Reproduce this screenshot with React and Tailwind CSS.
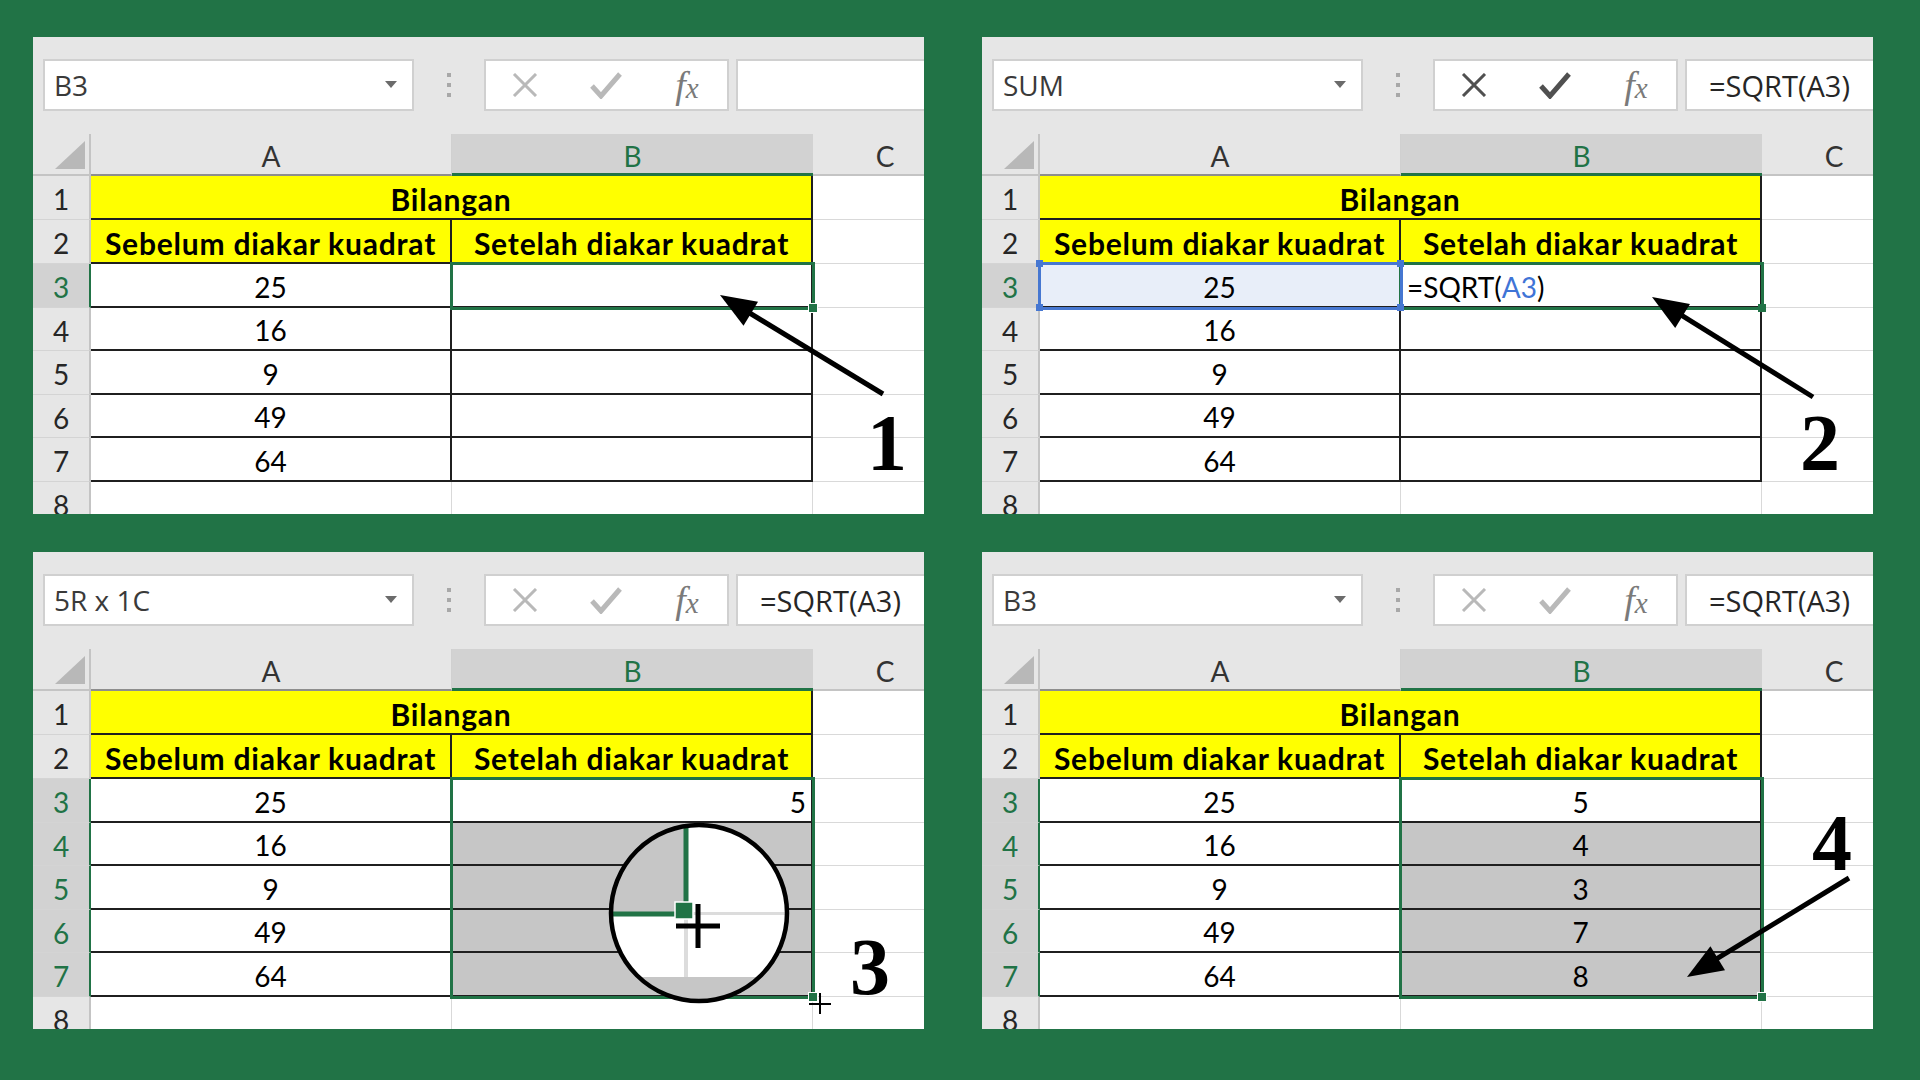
import React from "react";

const rowHeights = ["h-[44px]", "h-[44px]", "h-[44px]", "h-[43px]", "h-[44px]", "h-[43px]", "h-[44px]"];
const colA = [25, 16, 9, 49, 64];

function arrowHead(x1, y1, x2, y2, len, half) {
  const d = Math.hypot(x2 - x1, y2 - y1);
  const ux = (x2 - x1) / d;
  const uy = (y2 - y1) / d;
  const bx = x2 - ux * len;
  const by = y2 - uy * len;
  return `${x2},${y2} ${bx - uy * half},${by + ux * half} ${bx + uy * half},${by - ux * half}`;
}

const Arrow = ({ from, to }) => {
  const [x1, y1] = from;
  const [x2, y2] = to;
  const d = Math.hypot(x2 - x1, y2 - y1);
  const ex = x2 - ((x2 - x1) / d) * 26;
  const ey = y2 - ((y2 - y1) / d) * 26;
  return (
    <g>
      <line x1={x1} y1={y1} x2={ex} y2={ey} stroke="black" strokeWidth="5" />
      <polygon points={arrowHead(x1, y1, x2, y2, 36, 14)} fill="black" />
    </g>
  );
};

const StepNumber = ({ x, y, n }) => (
  <text
    x={x}
    y={y}
    textAnchor="middle"
    fontFamily="'Liberation Serif', serif"
    fontWeight="700"
    fontSize="80"
    fill="black"
  >
    {n}
  </text>
);

const Row = ({ h, n, sel, children }) => (
  <div className={`flex ${h} font-['Lato'] text-[28px] leading-none text-black`}>
    <div
      className={`flex w-[58px] shrink-0 items-center justify-center border-r-2 border-b border-b-[#d4d4d4] pt-[3px] ${
        sel
          ? "border-r-[#217346] bg-[#d2d2d2] text-[#217346]"
          : "border-r-[#c4c4c4] bg-[#e6e6e6] text-[#262626]"
      }`}
    >
      {n}
    </div>
    {children}
  </div>
);

const CCell = () => <div className="w-[144px] shrink-0 border-b border-[#d9d9d9] bg-white" />;

const Toolbar = ({ name, formula, active }) => (
  <div className="flex h-[97px] items-start pl-[10px] pt-[22px]">
    <div className="flex h-[52px] w-[371px] shrink-0 items-center justify-between border-2 border-[#d0d0d0] bg-white pl-[9px] pr-[15px]">
      <span className="font-['Open_Sans'] text-[28px] leading-none text-[#3a3a3a]">{name}</span>
      <svg width="12" height="8" viewBox="0 0 12 8">
        <path d="M0 0 H12 L6 7 Z" fill="#6b6b6b" />
      </svg>
    </div>
    <div className="flex h-[52px] w-[70px] shrink-0 flex-col items-center justify-center gap-[6px]">
      <span className="h-[4px] w-[4px] bg-[#a8a8a8]" />
      <span className="h-[4px] w-[4px] bg-[#a8a8a8]" />
      <span className="h-[4px] w-[4px] bg-[#a8a8a8]" />
    </div>
    <div
      className={`flex h-[52px] w-[245px] shrink-0 items-center border-2 border-[#d0d0d0] bg-white ${
        active ? "text-[#505050]" : "text-[#b9b9b9]"
      }`}
    >
      <div className="flex w-[78px] justify-center">
        <svg width="28" height="24" viewBox="0 0 28 24">
          <path d="M3 1 L25 23 M25 1 L3 23" stroke="currentColor" strokeWidth="3" fill="none" />
        </svg>
      </div>
      <div className="flex w-[83px] justify-center">
        <svg width="32" height="27" viewBox="0 0 32 27">
          <path d="M2 14 L11 24 L30 2" stroke="currentColor" strokeWidth="5" fill="none" />
        </svg>
      </div>
      <div className="flex w-[80px] justify-center">
        <span className="font-['Liberation_Serif'] text-[38px] italic leading-none text-[#7a7a7a]">
          f<span className="text-[29px]">x</span>
        </span>
      </div>
    </div>
    <div className="ml-[7px] flex h-[52px] flex-1 items-center overflow-hidden border-2 border-r-0 border-[#d0d0d0] bg-white pl-[22px]">
      <span className="whitespace-nowrap font-['Open_Sans'] text-[29px] leading-none text-[#262626]">{formula}</span>
    </div>
  </div>
);

const Panel = ({ name, formula, active, selRows, bCells, a3Blue, children, selection }) => (
  <div className="relative h-[477px] w-[891px] overflow-hidden bg-[#e6e6e6]">
    <Toolbar name={name} formula={formula} active={active} />

    {/* column headers */}
    <div className="flex h-[42px] font-['Lato'] text-[28px] leading-none">
      <div className="relative w-[58px] shrink-0 border-r-2 border-b-2 border-[#c4c4c4]">
        <svg className="absolute left-[22px] top-[7px]" width="30" height="28" viewBox="0 0 30 28">
          <polygon points="30,0 30,28 0,28" fill="#b8b8b8" />
        </svg>
      </div>
      <div className="flex w-[361px] shrink-0 items-center justify-center border-r border-b-2 border-r-[#d0d0d0] border-b-[#8e8e8e] pt-[4px] text-[#333]">
        A
      </div>
      <div className="flex w-[361px] shrink-0 items-center justify-center border-b-[3px] border-[#217346] bg-[#d2d2d2] pt-[4px] text-[#217346]">
        B
      </div>
      <div className="flex w-[144px] shrink-0 items-center justify-center border-b-2 border-[#c4c4c4] pt-[4px] text-[#333]">
        C
      </div>
    </div>

    <Row h={rowHeights[0]} n={1}>
      <div className="flex w-[722px] shrink-0 items-center justify-center border-r-2 border-b-2 border-[#1f1f1f] bg-[#ffff00] pt-[3px] text-[30px] font-bold tracking-[0.8px]">
        Bilangan
      </div>
      <CCell />
    </Row>
    <Row h={rowHeights[1]} n={2}>
      <div className="flex w-[361px] shrink-0 items-center justify-center border-r-2 border-b-2 border-[#1f1f1f] bg-[#ffff00] pt-[3px] text-[30px] font-bold tracking-[0.8px]">
        Sebelum diakar kuadrat
      </div>
      <div className="flex w-[361px] shrink-0 items-center justify-center border-r-2 border-b-2 border-[#1f1f1f] bg-[#ffff00] pt-[3px] text-[30px] font-bold tracking-[0.8px]">
        Setelah diakar kuadrat
      </div>
      <CCell />
    </Row>
    {colA.map((v, i) => {
      const b = bCells[i];
      return (
        <Row key={v} h={rowHeights[i + 2]} n={i + 3} sel={selRows.includes(i + 3)}>
          <div
            className={`flex w-[361px] shrink-0 items-center justify-center border-r-2 border-b-2 border-[#1f1f1f] pt-[3px] ${
              a3Blue && i === 0 ? "bg-[#e8eef9]" : "bg-white"
            }`}
          >
            {v}
          </div>
          <div
            className={`flex w-[361px] shrink-0 items-center border-r-2 border-b-2 border-[#1f1f1f] pt-[3px] ${
              b.gray ? "bg-[#c6c6c6]" : "bg-white"
            } ${b.align === "right" ? "justify-end pr-[5px]" : b.align === "left" ? "justify-start pl-[6px]" : "justify-center"}`}
          >
            {b.text}
          </div>
          <CCell />
        </Row>
      );
    })}
    <Row h="h-[44px]" n={8}>
      <div className="w-[361px] shrink-0 border-r border-[#d9d9d9] bg-white" />
      <div className="w-[361px] shrink-0 border-r border-[#d9d9d9] bg-white" />
      <div className="w-[144px] shrink-0 bg-white" />
    </Row>

    {selection}

    <svg className="pointer-events-none absolute left-0 top-0" width="891" height="477" viewBox="0 0 891 477">
      {children}
    </svg>
  </div>
);

const emptyB = [{}, {}, {}, {}, {}];

const App = () => {
  return (
    <div className="h-[1080px] w-[1920px] overflow-hidden bg-[#217346] pl-[33px] pt-[37px]">
      <div className="grid grid-cols-[891px_891px] gap-x-[58px] gap-y-[38px]">
        {/* 1 */}
        <Panel
          name="B3"
          formula=""
          selRows={[3]}
          bCells={emptyB}
          selection={
            <>
              <div className="absolute left-[417px] top-[225px] h-[48px] w-[365px] border-[3px] border-[#217346]" />
              <div className="absolute left-[775px] top-[266px] h-[10px] w-[10px] border border-white bg-[#217346]" />
            </>
          }
        >
          <Arrow from={[850, 357]} to={[687, 258]} />
          <StepNumber x={854} y={433} n="1" />
        </Panel>

        {/* 2 */}
        <Panel
          name="SUM"
          formula="=SQRT(A3)"
          active
          a3Blue
          selRows={[3]}
          bCells={[
            {
              align: "left",
              text: (
                <span>
                  =SQRT(<span className="text-[#3f74d6]">A3</span>)
                </span>
              ),
            },
            {},
            {},
            {},
            {},
          ]}
          selection={
            <>
              <div className="absolute left-[417px] top-[225px] h-[48px] w-[365px] border-[3px] border-[#217346]" />
              <div className="absolute left-[776px] top-[267px] h-[8px] w-[8px] bg-[#217346]" />
              <div className="absolute left-[56px] top-[225px] h-[48px] w-[365px] border-[3px] border-[#4677d1]" />
              <div className="absolute left-[54px] top-[223px] h-[7px] w-[7px] bg-[#4677d1]" />
              <div className="absolute left-[415px] top-[223px] h-[7px] w-[7px] bg-[#4677d1]" />
              <div className="absolute left-[54px] top-[267px] h-[7px] w-[7px] bg-[#4677d1]" />
              <div className="absolute left-[415px] top-[267px] h-[7px] w-[7px] bg-[#4677d1]" />
            </>
          }
        >
          <Arrow from={[831, 360]} to={[670, 260]} />
          <StepNumber x={838} y={433} n="2" />
        </Panel>

        {/* 3 */}
        <Panel
          name="5R x 1C"
          formula="=SQRT(A3)"
          selRows={[3, 4, 5, 6, 7]}
          bCells={[
            { text: "5", align: "right" },
            { gray: true },
            { gray: true },
            { gray: true },
            { gray: true },
          ]}
          selection={
            <>
              <div className="absolute left-[417px] top-[225px] h-[222px] w-[365px] border-[3px] border-[#217346]" />
              <div className="absolute left-[775px] top-[440px] h-[10px] w-[10px] border border-white bg-[#217346]" />
            </>
          }
        >
          <defs>
            <clipPath id="lens">
              <circle cx="666" cy="361" r="88" />
            </clipPath>
          </defs>
          <circle cx="666" cy="361" r="88" fill="white" />
          <g clipPath="url(#lens)">
            <rect x="570" y="265" width="83" height="96" fill="#c6c6c6" />
            <rect x="570" y="425" width="200" height="40" fill="#c6c6c6" />
            <rect x="651" y="367" width="4" height="58" fill="#dcdcdc" />
            <rect x="660" y="360" width="100" height="3" fill="#dcdcdc" />
            <rect x="650.5" y="265" width="5" height="86" fill="#217346" />
            <rect x="570" y="359.5" width="73" height="5" fill="#217346" />
            <rect x="642" y="350" width="18" height="17" fill="#217346" stroke="white" strokeWidth="1.5" />
          </g>
          <circle cx="666" cy="361" r="88" fill="none" stroke="black" strokeWidth="4.5" />
          <path d="M643 374 H687 M665 352 V396" stroke="black" strokeWidth="5" />
          <path d="M776 452 H798 M787 441 V462" stroke="black" strokeWidth="2" />
          <StepNumber x={837} y={442} n="3" />
        </Panel>

        {/* 4 */}
        <Panel
          name="B3"
          formula="=SQRT(A3)"
          selRows={[3, 4, 5, 6, 7]}
          bCells={[
            { text: "5" },
            { text: "4", gray: true },
            { text: "3", gray: true },
            { text: "7", gray: true },
            { text: "8", gray: true },
          ]}
          selection={
            <>
              <div className="absolute left-[417px] top-[225px] h-[222px] w-[365px] border-[3px] border-[#217346]" />
              <div className="absolute left-[775px] top-[440px] h-[10px] w-[10px] border border-white bg-[#217346]" />
            </>
          }
        >
          <Arrow from={[867, 326]} to={[705, 425]} />
          <StepNumber x={850} y={318} n="4" />
        </Panel>
      </div>
    </div>
  );
};

export default App;
